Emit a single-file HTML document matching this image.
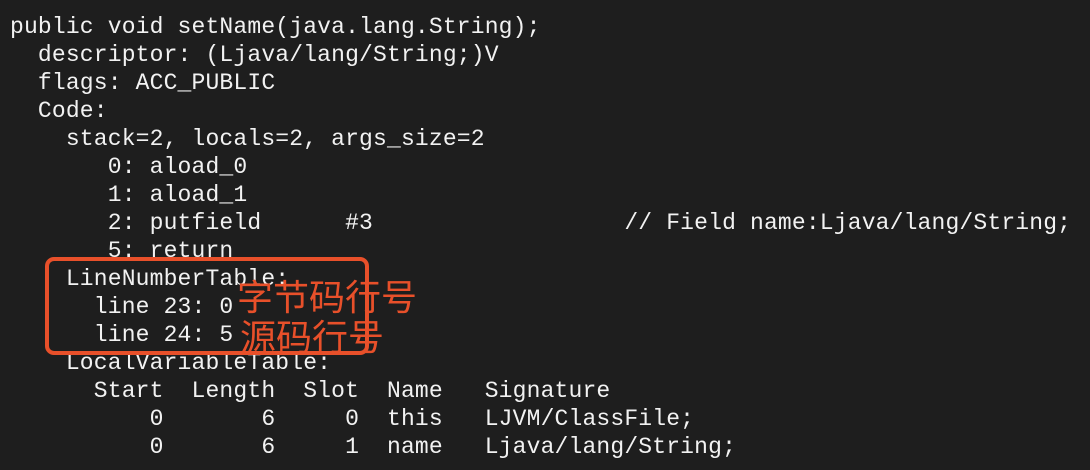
<!DOCTYPE html>
<html><head><meta charset="utf-8"><style>
html,body{margin:0;padding:0;background:#1e1e1e;width:1090px;height:470px;overflow:hidden}
pre{position:absolute;left:10px;top:13px;margin:0;font-family:"Liberation Mono",monospace;font-size:23px;letter-spacing:0.16px;line-height:28px;color:#f2f2f2}
.box{position:absolute;left:45px;top:257px;width:316px;height:90px;border:4px solid #e8502a;border-radius:9px}
.cn{position:absolute;font-family:"Liberation Sans","Noto Sans CJK SC",sans-serif;font-size:36px;line-height:36px;color:#e8502a}
</style></head><body>
<pre>public void setName(java.lang.String);
  descriptor: (Ljava/lang/String;)V
  flags: ACC_PUBLIC
  Code:
    stack=2, locals=2, args_size=2
       0: aload_0
       1: aload_1
       2: putfield      #3                  // Field name:Ljava/lang/String;
       5: return
    LineNumberTable:
      line 23: 0
      line 24: 5
    LocalVariableTable:
      Start  Length  Slot  Name   Signature
          0       6     0  this   LJVM/ClassFile;
          0       6     1  name   Ljava/lang/String;</pre>
<div class="box"></div>
<div class="cn" style="left:237px;top:280px">字节码行号</div>
<div class="cn" style="left:240px;top:320px">源码行号</div>
</body></html>
